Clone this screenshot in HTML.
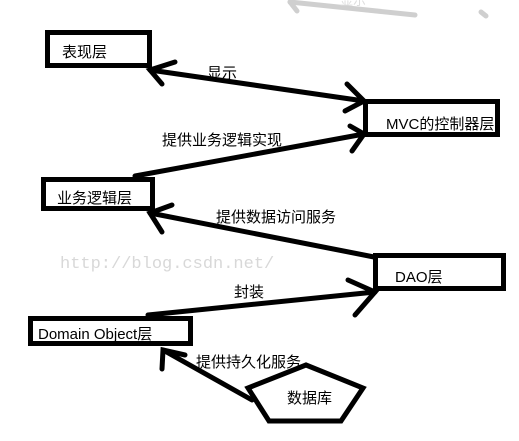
<!DOCTYPE html>
<html><head><meta charset="utf-8"><style>
html,body{margin:0;padding:0;background:#fff;width:519px;height:441px;overflow:hidden}
svg{display:block}
text{font-family:"Liberation Sans","Noto Sans CJK SC",sans-serif;font-size:15px;fill:#000}
</style></head><body>
<svg width="519" height="441" viewBox="0 0 519 441" xmlns="http://www.w3.org/2000/svg">
<!-- faint top watermark -->
<g stroke="#cfcfcf" stroke-width="5" fill="none" stroke-linecap="round">
<line x1="290" y1="2" x2="415" y2="15"/>
<line x1="290" y1="2" x2="297" y2="11"/>
<line x1="481" y1="12" x2="486" y2="16"/>
</g>
<text x="340" y="5" style="fill:#ddd;font-size:13px">显示</text>
<text x="60" y="268" style="fill:#d8d8d8;font-family:'Liberation Mono','DejaVu Sans Mono',monospace;font-size:17px">http://blog.csdn.net/</text>
<g stroke="#000" stroke-width="5" fill="none" stroke-linecap="round" stroke-linejoin="miter">
<rect x="47.5" y="32.5" width="102" height="33"/>
<rect x="365.5" y="101.5" width="132" height="33"/>
<rect x="43.5" y="179.5" width="109" height="29"/>
<rect x="375.5" y="255.5" width="128" height="33"/>
<rect x="30.5" y="318.5" width="160" height="25"/>
<polygon points="306,365 363,388 341,421 269,421 248,388"/>
<!-- arrow 1 -->
<line x1="150" y1="70" x2="364" y2="101"/>
<polyline points="175,62 150,70 162,84"/>
<polyline points="347,84 364,101 345,111"/>
<!-- arrow 2 -->
<line x1="135" y1="176" x2="364" y2="134"/>
<polyline points="350,126 364,134 352,151"/>
<!-- arrow 3 -->
<line x1="150" y1="213" x2="374" y2="257"/>
<polyline points="172,205 150,213 162,232"/>
<!-- arrow 4 -->
<line x1="148" y1="315" x2="375" y2="292"/>
<polyline points="348,280 375,292 355,315"/>
<!-- arrow 5 -->
<line x1="163" y1="350" x2="252" y2="400"/>
<polyline points="185,355 163,350 162,369"/>
</g>
<text x="62" y="57">表现层</text>
<text x="386" y="129">MVC的控制器层</text>
<text x="57" y="203">业务逻辑层</text>
<text x="395" y="282">DAO层</text>
<text x="38" y="339">Domain Object层</text>
<text x="287" y="403">数据库</text>
<text x="207" y="78">显示</text>
<text x="162" y="145">提供业务逻辑实现</text>
<text x="216" y="222">提供数据访问服务</text>
<text x="234" y="297">封装</text>
<text x="196" y="367">提供持久化服务</text>
</svg>
</body></html>
